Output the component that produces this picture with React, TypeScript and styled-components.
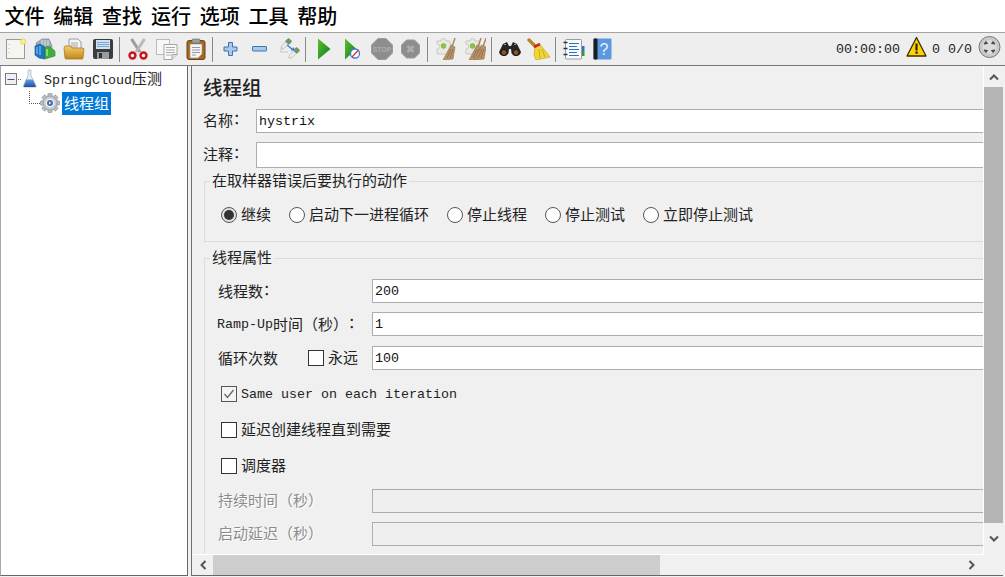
import React from 'react';
import styled, { createGlobalStyle } from 'styled-components';

const CJK = `"Noto Sans CJK SC", "Noto Sans", sans-serif`;
const MONO = `"Liberation Mono", "Noto Sans CJK SC", monospace`;

const Global = createGlobalStyle`
  html, body { margin: 0; padding: 0; background: #fff; }
  * { box-sizing: border-box; }
`;

const Window = styled.div`
  width: 1005px; height: 577px; overflow: hidden; display: flex; flex-direction: column;
  background: #fff; font-family: ${CJK}; font-size: 15px; color: #222; text-spacing-trim: space-all;
`;
const MenuBar = styled.div`
  height: 32px; flex: none; display: flex; align-items: center; gap: 8.8px; padding-left: 4.5px; background: #fff;
`;
const MenuItem = styled.span`
  font-size: 20px; line-height: 32px; font-weight: 500; color: #000;
`;
const ToolBar = styled.div`
  height: 34px; flex: none; display: flex; align-items: center; padding-left: 1px;
  background: #eee; border-top: 1px solid #a3a3a3; border-bottom: 1px solid #777;
`;
const Slot = styled.span`
  width: 29px; height: 32px; flex: none; display: flex; align-items: center; justify-content: center;
`;
const Sep = styled.span`
  width: 6px; height: 25px; flex: none; padding-left: 2px;
  &::before { content: ''; display: block; width: 1px; height: 100%; background: #8a8a8a; }
`;
const Status = styled.div`
  margin-left: auto; display: flex; align-items: center; height: 32px; padding-right: 4px;
  font: 13.33px "Liberation Mono", monospace; color: #222;
`;
const StatusText = styled.span<{ $l: number }>`
  margin-left: ${p => p.$l}px;
`;
const Main = styled.div`
  flex: 1; min-height: 0; display: flex; background: #f0f0f0;
`;
const Tree = styled.div`
  width: 188px; flex: none; background: #fff;
  border-left: 1px solid #a8a8a8; border-right: 1px solid #666; border-bottom: 1px solid #666;
  margin-bottom: 1px;
`;
const TreeRow = styled.div<{ $top?: number }>`
  height: 24px; display: flex; align-items: center; margin: ${p => p.$top ?? 0}px 0 0 -1px;
`;
const TreeText = styled.span<{ $sel?: boolean }>`
  margin-left: ${p => (p.$sel ? 2 : 4)}px; height: 23px; line-height: 21px; padding: 0 2px;
  background: ${p => (p.$sel ? '#0078d7' : 'transparent')}; color: ${p => (p.$sel ? '#fff' : '#222')};
  white-space: nowrap;
`;
const Latin = styled.span`
  font: 13.33px ${MONO};
`;
const Colon = styled.span`
  display: inline-block; transform: translateY(-2px);
`;
const Gutter = styled.div`
  width: 3px; flex: none;
`;
const Panel = styled.div`
  width: 812px; flex: none; margin-bottom: 1px; display: grid;
  grid-template-columns: 1fr 19px; grid-template-rows: 1fr 20px;
  border-left: 1px solid #707070; border-bottom: 1px solid #666; background: #f0f0f0;
`;
const Viewport = styled.div`
  overflow: hidden; min-width: 0; min-height: 0; position: relative;
  border-right: 1px solid #fff; border-bottom: 1px solid #fff;
`;
const Content = styled.div`
  width: 1100px; padding: 10px 0 0 11px;
`;
const Title = styled.h1`
  margin: 0; font: 500 19.5px/22px ${CJK}; color: #222; height: 33px;
`;
const TopRow = styled.div<{ $gap: number }>`
  display: flex; align-items: center; margin-bottom: ${p => p.$gap}px;
`;
const TopLabel = styled.label`
  width: 53px; flex: none; line-height: 20px; padding-bottom: 3px;
`;
const Input = styled.div<{ $h?: number; $disabled?: boolean }>`
  flex: 1; height: ${p => p.$h ?? 24}px; padding-left: 2px; white-space: nowrap;
  border: 1px solid #adadad; background: ${p => (p.$disabled ? '#efefef' : '#fff')};
  font: 13.33px/${p => p.$h ?? 24}px "Liberation Mono", monospace; color: #111;
`;
const Group = styled.fieldset<{ $top: number; $grow?: boolean }>`
  margin: ${p => p.$top}px 0 0 1px; padding: 0; border: 1px solid #dcdcdc; min-width: 0;
  ${p => (p.$grow ? 'height: 400px;' : '')}
`;
const Legend = styled.legend`
  margin-left: 5px; padding: 0 2px 2px; font-size: 15px; line-height: 18px; color: #222;
`;
const RadioRow = styled.div`
  display: flex; align-items: center; gap: 18px; height: 20px; margin: 14px 0 16px 16px;
`;
const Choice = styled.label`
  display: flex; align-items: center; gap: 4px; line-height: 20px; height: 20px; white-space: nowrap;
`;
const ChoiceText = styled.span`
  padding-bottom: 2px;
`;
const Radio = styled.span<{ $on?: boolean }>`
  width: 16px; height: 16px; flex: none; border-radius: 50%; border: 1px solid #555;
  background: #fff; display: flex; align-items: center; justify-content: center;
  ${p => p.$on ? 'background: #e2e2e2; &::after { content: ""; width: 10px; height: 10px; border-radius: 50%; background: #333; }' : ''}
`;
const Box = styled.span<{ $on?: boolean }>`
  width: 16px; height: 16px; flex: none; border: 1px solid ${p => (p.$on ? '#555' : '#333')};
  background: ${p => (p.$on ? '#f3f3f3' : '#fff')}; display: flex; align-items: center; justify-content: center;
`;
const Fields = styled.div`
  padding: 11px 0 0 13px; display: flex; flex-direction: column;
`;
const FieldRow = styled.div<{ $gap: number }>`
  display: flex; align-items: center; margin-bottom: ${p => p.$gap}px;
`;
const FieldLabel = styled.label<{ $disabled?: boolean }>`
  width: 154px; flex: none; display: flex; align-items: center; line-height: 20px; white-space: nowrap;
  ${p => p.$disabled ? 'color: #8c8c8c; text-shadow: 1px 1px 0 #fff; padding-bottom: 3px;' : ''}
`;
const RampLabel = styled(FieldLabel)`
  margin-left: -1px; width: 155px;
`;
const LoopText = styled.span`
  width: 90px; flex: none;
`;
const CheckRow = styled.div<{ $gap: number }>`
  margin: 0 0 ${p => p.$gap}px 3px;
`;
const MonoText = styled.span`
  font: 13.33px "Liberation Mono", monospace; color: #222;
`;
const VBar = styled.div`
  display: flex; flex-direction: column; align-items: stretch; background: #f0f0f0;
`;
const VArrow = styled.span<{ $h: number }>`
  height: ${p => p.$h}px; flex: none; display: flex; align-items: center; justify-content: center;
`;
const VThumb = styled.span`
  height: 436px; flex: none; background: #b4b4b4;
`;
const HBar = styled.div`
  display: flex; align-items: stretch; background: #f0f0f0;
`;
const HArrow = styled.span<{ $w: number }>`
  width: ${p => p.$w}px; flex: none; display: flex; align-items: center; justify-content: center;
`;
const HThumb = styled.span`
  width: 447px; flex: none; background: #cdcdcd;
`;
const HRest = styled.span`
  flex: 1;
`;
const Corner = styled.div`
  background: #f0f0f0;
`;

const I = ({ children, w = 22, h = 22 }: { children: React.ReactNode; w?: number; h?: number }) => (
  <svg width={w} height={h} viewBox={`0 0 ${w} ${h}`} aria-hidden="true">{children}</svg>
);

const NewIcon = () => (
  <I>
    <rect x="1.5" y="1.5" width="18" height="19" fill="#f6f6f0" stroke="#9a9a9a" />
    <path d="M4 6v1M4 10v1M4 14v1" stroke="#bbb" />
    <circle cx="18" cy="3.5" r="2.600" fill="#fdf28a" stroke="#ecd35a" />
  </I>
);
const TemplatesIcon = () => (
  <I>
    <path d="M2 5 L8 1 L15 1 L18 8 L17 14 L4 14Z" fill="#a3adb8" stroke="#6f7b88" strokeWidth=".6" />
    <path d="M8 2v9M11 2v9M14 2v9" stroke="#dfe4e9" />
    <path d="M1 8 L6 6 L11 9 L11 21 L5 20 L1 17Z" fill="#1d76c4" stroke="#0f4f8f" strokeWidth=".6" />
    <path d="M3 9v7M6 8v9" stroke="#8ccaf4" />
    <path d="M11 9 L15 8 L21 13 L21 18 L11 21Z" fill="#43ad3b" stroke="#2a8a2a" strokeWidth=".6" />
    <path d="M13 11v7" stroke="#a8e896" strokeWidth="1.4" />
  </I>
);
const OpenIcon = () => (
  <I>
    <defs><linearGradient id="fo" x1="0" y1="0" x2="0" y2="1"><stop offset="0" stopColor="#f5cd6c" /><stop offset="1" stopColor="#c4861d" /></linearGradient></defs>
    <path d="M6 1h9l3 3v8H6Z" fill="#f4f4f4" stroke="#888" strokeWidth=".8" />
    <path d="M8 5h7M8 7h7M8 9h7" stroke="#aaa" />
    <path d="M1 10 l1-2h6l1 2h11l1 1-1 9a1 1 0 0 1-1 1H3a1 1 0 0 1-1-1Z" fill="url(#fo)" stroke="#a46e14" strokeWidth=".7" />
  </I>
);
const SaveIcon = () => (
  <I>
    <rect x="1" y="1" width="20" height="20" rx="2" fill="#3a3d42" />
    <rect x="4" y="2" width="14" height="9" fill="#cfe1f2" />
    <path d="M5 4.5h12M5 6.500h12M5 8.500h12" stroke="#7fa6cc" />
    <rect x="5" y="14" width="12" height="7" fill="#9a9ca0" />
    <rect x="7" y="15" width="3" height="5" fill="#333" />
  </I>
);
const CutIcon = () => (
  <I>
    <path d="M4.500 1 L13 14" stroke="#9b9b9b" strokeWidth="3" />
    <path d="M17.500 1 L9 14" stroke="#b8b8b8" strokeWidth="3" />
    <circle cx="5.500" cy="17.500" r="3" fill="#eee" stroke="#c9141c" strokeWidth="2.400" />
    <circle cx="16.500" cy="17.500" r="3" fill="#eee" stroke="#c9141c" strokeWidth="2.400" />
  </I>
);
const CopyIcon = () => (
  <I>
    <rect x="0.500" y="1.500" width="13" height="15" fill="#f7f7f7" stroke="#bbb" />
    <path d="M8 6.500h13v10l-5 5H8Z" fill="#fafafa" stroke="#a5a5a5" />
    <path d="M10 9.500h9M10 12h9M10 14.500h9M10 17h5" stroke="#aaa" />
    <path d="M16 21.500v-5h5" fill="#ddd" stroke="#a5a5a5" />
  </I>
);
const PasteIcon = () => (
  <I>
    <rect x="2" y="2.500" width="18" height="19" rx="2" fill="#a9671f" stroke="#6f4412" />
    <path d="M5 6h12v10l-4 4H5Z" fill="#f6f6f6" stroke="#999" strokeWidth=".7" />
    <path d="M7 9.500h8M7 12h8M7 14.500h8M7 17h4" stroke="#999" />
    <rect x="7" y="1" width="8" height="4" rx="1" fill="#9e9e9e" stroke="#666" strokeWidth=".6" />
  </I>
);
const PlusIcon = () => (
  <I>
    <path d="M8.500 4.500h4v4.500h4.500v4H12.500v4.500H8.500V13H4V9H8.500Z" fill="#a9c9ea" stroke="#3d74b0" />
  </I>
);
const MinusIcon = () => (
  <I>
    <rect x="3.500" y="8.500" width="14" height="4.500" rx=".5" fill="#a9c9ea" stroke="#3d74b0" />
  </I>
);
const Dropper = ({ x, y }: { x: number; y: number }) => (
  <g transform={`translate(${x} ${y}) rotate(45) scale(1.2)`}>
    <rect x="-2" y="-5" width="4" height="4" rx="1" fill="#6d9b5e" stroke="#557" strokeWidth=".3" />
    <path d="M-1.500 -1h3v5l-1.500 2l-1.500-2Z" fill="#ececec" stroke="#aaa" strokeWidth=".5" />
  </g>
);
const ToggleIcon = () => (
  <I>
    <Dropper x={8} y={6} />
    <Dropper x={16} y={15} />
    <path d="M2 14 L5 9M2 14h8" stroke="#c8c8c8" fill="none" />
    <path d="M9 7 L14.500 11.500" stroke="#2f7fdc" strokeWidth="1.400" />
    <path d="M12.500 12.500h3.500v-3.500Z" fill="#2f7fdc" />
  </I>
);
const StartIcon = () => (
  <I>
    <defs><linearGradient id="gr" x1="0" y1="0" x2="1" y2="1"><stop offset="0" stopColor="#5fc02e" /><stop offset="1" stopColor="#067a24" /></linearGradient></defs>
    <path d="M5 0.500 L17.500 11 L5 21.500Z" fill="url(#gr)" />
  </I>
);
const StartNoPauseIcon = () => (
  <I>
    <defs><linearGradient id="gs" x1="0" y1="0" x2="1" y2="1"><stop offset="0" stopColor="#5fc02e" /><stop offset="1" stopColor="#067a24" /></linearGradient></defs>
    <path d="M3 0.500 L14.500 11 L3 21.500Z" fill="url(#gs)" />
    <circle cx="13" cy="15.500" r="4.500" fill="#fff" stroke="#3a7fdc" strokeWidth="1.300" />
    <path d="M10 19 L16.500 12" stroke="#e03030" strokeWidth="1.300" />
  </I>
);
const StopText = styled.text`
  font: bold 6.8px "Liberation Sans", sans-serif; fill: #aeaeae;
`;
const StopIcon = () => (
  <I>
    <path d="M7 0.500h8l6.500 6.500v8L15 21.500H7L0.500 15V7Z" fill="#8d8d8d" stroke="#9c9c9c" />
    <StopText x="11" y="13.500" textAnchor="middle">STOP</StopText>
  </I>
);
const ShutdownIcon = () => (
  <I>
    <path d="M6.500 2h8l5 5v8l-5 5h-8l-5-5V7Z" fill="#8d8d8d" stroke="#9c9c9c" />
    <path d="M7.500 8l6 6M13.500 8l-6 6" stroke="#adadad" strokeWidth="2.600" />
  </I>
);
const Puzzle = () => (
  <g transform="translate(0 -4)">
    <path d="M2 7h4a2.500 2.500 0 0 1 5 0h4v3a2.500 2.500 0 0 1 0 5v5H2v-5a2.500 2.500 0 0 0 0-5Z" fill="#e8e8e4" stroke="#c8c8c4" />
    <circle cx="8.500" cy="12" r="2.400" fill="#8cc63f" stroke="#6b9e2a" strokeWidth=".5" />
  </g>
);
const Brush = ({ x = 0 }: { x?: number }) => (
  <g transform={`translate(${x} 0)`}>
    <path d="M17 0 L14 9" stroke="#a8865c" strokeWidth="1.400" />
    <path d="M13 7 L17 9 L15 21 L5 22Z" fill="#b79368" stroke="#96744c" strokeWidth=".6" />
    <path d="M13 11 L9 20M15 11 L12 20" stroke="#8a6a44" strokeWidth=".8" />
  </g>
);
const ClearIcon = () => (
  <I><Puzzle /><Brush x={3} /></I>
);
const ClearAllIcon = () => (
  <I><Puzzle /><Brush x={0} /><Brush x={5} /></I>
);
const BinocularsIcon = () => (
  <I>
    <path d="M4 6 L8 4 L10 8 L12 8 L14 4 L18 6 L22 14 A5 5 0 0 1 12.500 15 L12 11 H10 L9.500 15 A5 5 0 0 1 0 14Z" fill="#262626" />
    <circle cx="5" cy="14.500" r="3" fill="#8a5423" stroke="#111" />
    <circle cx="17" cy="14.500" r="3" fill="#8a5423" stroke="#111" />
    <path d="M5 6.500h2M15 6.500h2" stroke="#999" />
  </I>
);
const BroomIcon = () => (
  <I w={24}>
    <path d="M2 2 L9 9" stroke="#b9822d" strokeWidth="3.400" strokeLinecap="round" />
    <path d="M8 9 L13 6.500 L20 15 L23 19 L14 21 L9 22 L7 17Z" fill="#f1d435" stroke="#b8a020" strokeWidth=".6" />
    <path d="M7 9 L13 6" stroke="#cc2a2a" strokeWidth="2.600" />
    <path d="M12 11 L13 20M15 11 L18 19" stroke="#c9ac1e" />
  </I>
);
const LogIcon = () => (
  <I>
    <rect x="2.500" y="1.500" width="16" height="19.500" rx="1" fill="#fafafa" stroke="#9b9b9b" />
    <path d="M6 5.500h10M6 8.500h8M6 11.500h10M6 14.500h8M6 17.500h10" stroke="#2a73d2" strokeWidth="1.200" />
    <path d="M0.500 4.500h4M0.500 10.500h4M0.500 16.500h4" stroke="#333" strokeWidth="1.400" />
    <rect x="19" y="8" width="2.500" height="5" fill="#2a73d2" />
    <rect x="19" y="13" width="2.500" height="5" fill="#2e9a3a" />
  </I>
);
const HelpText = styled.text`
  font: 16px "Liberation Sans", sans-serif; fill: #eaf3ff;
`;
const HelpIcon = () => (
  <I>
    <rect x="1.500" y="0.500" width="18" height="21" rx="1" fill="#5a98e0" />
    <rect x="1.500" y="0.500" width="4" height="21" rx="1" fill="#1c1c1c" />
    <HelpText x="12" y="17" textAnchor="middle">?</HelpText>
  </I>
);
const WarningIcon = () => (
  <I w={21}>
    <path d="M10.500 1.500 L20 20 H1Z" fill="#ffd200" stroke="#3a3000" strokeWidth="1.300" strokeLinejoin="round" />
    <path d="M10.500 7.500v7" stroke="#222" strokeWidth="2.200" />
    <rect x="9.500" y="15.500" width="2.200" height="2.200" fill="#222" />
  </I>
);
const RemoteIcon = () => (
  <I w={23}>
    <circle cx="11.500" cy="11" r="10.500" fill="#c9c9c9" stroke="#777" />
    <circle cx="11.500" cy="11" r="7" fill="#dcdcdc" />
    <path d="M6 8 L8 5.500 L9.500 7.500ZM17 8 L15 5.500 L13.500 7.500ZM6 14 L8 16.500 L9.500 14.500ZM17 14 L15 16.500 L13.500 14.500Z" fill="#444" stroke="#444" />
  </I>
);
const ExpandBox = () => (
  <svg width="22" height="24" viewBox="0 0 22 24" aria-hidden="true">
    <rect x="5.500" y="7.500" width="11" height="11" fill="#f0f0f0" stroke="#7b7b7b" />
    <path d="M7.500 13.500h7" stroke="#3a5a90" />
    <path d="M18 13.500h4" stroke="#666" strokeDasharray="1 1" />
  </svg>
);
const FlaskIcon = () => (
  <svg width="16" height="19" viewBox="0 0 16 20" aria-hidden="true">
    <defs><linearGradient id="fl" x1="0" y1="0" x2="0" y2="1"><stop offset="0" stopColor="#5f9fe8" /><stop offset="1" stopColor="#1d4f9e" /></linearGradient></defs>
    <path d="M6 1h3v6l5.500 10.500a1 1 0 0 1-1 1.500H2a1 1 0 0 1-1-1.500L6 7Z" fill="#e8eef4" stroke="#a0acb8" strokeWidth=".7" />
    <path d="M4 11h7l3 7a.6.6 0 0 1-.5 1H2a.6.6 0 0 1-.5-1Z" fill="url(#fl)" />
  </svg>
);
const Connector = () => (
  <svg width="40" height="24" viewBox="0 0 40 24" aria-hidden="true">
    <path d="M29.500 0v12.500H40" fill="none" stroke="#555" strokeDasharray="1 1" />
  </svg>
);
const GearIcon = () => (
  <svg width="20" height="20" viewBox="0 0 20 20" aria-hidden="true">
    <g fill="#b9bdc4" stroke="#7f848c" strokeWidth=".5">
      {[0, 45, 90, 135, 180, 225, 270, 315].map(a => (
        <rect key={a} x="7.800" y="0.300" width="4.400" height="5" rx="1" transform={`rotate(${a} 10 10)`} />
      ))}
    </g>
    <circle cx="10" cy="10" r="7" fill="#c9ccd2" stroke="#868b92" strokeWidth=".6" />
    <circle cx="10" cy="10" r="4.300" fill="#f4f5f7" />
    <circle cx="10" cy="10" r="3" fill="#3f6fa8" />
    <path d="M9 8.500l2.500 1.500-2.500 1.500Z" fill="#dce8f5" />
  </svg>
);
const Chevron = ({ d }: { d: 'up' | 'down' | 'left' | 'right' }) => {
  const r = { up: 0, right: 90, down: 180, left: 270 }[d];
  return (
    <svg width="10" height="10" viewBox="0 0 10 10" aria-hidden="true">
      <path d="M1 7.500 L5 3.500 L9 7.500" fill="none" stroke="#555" strokeWidth="2" transform={`rotate(${r} 5 5)`} />
    </svg>
  );
};
const Tick = () => (
  <svg width="12" height="12" viewBox="0 0 12 12" aria-hidden="true">
    <path d="M1.500 6 L4.500 9.500 L10.500 2" fill="none" stroke="#666" strokeWidth="1.300" />
  </svg>
);

const toolGroups: React.FC[][] = [
  [NewIcon, TemplatesIcon, OpenIcon, SaveIcon],
  [CutIcon, CopyIcon, PasteIcon],
  [PlusIcon, MinusIcon, ToggleIcon],
  [StartIcon, StartNoPauseIcon, StopIcon, ShutdownIcon],
  [ClearIcon, ClearAllIcon],
  [BinocularsIcon, BroomIcon],
  [LogIcon, HelpIcon],
];

const menus = ['文件', '编辑', '查找', '运行', '选项', '工具', '帮助'];
const radios = ['继续', '启动下一进程循环', '停止线程', '停止测试', '立即停止测试'];

export default function App() {
  return (
    <Window>
      <Global />
      <MenuBar>{menus.map(m => <MenuItem key={m}>{m}</MenuItem>)}</MenuBar>
      <ToolBar>
        {toolGroups.map((group, gi) => (
          <React.Fragment key={gi}>
            {gi > 0 && <Sep />}
            {group.map((Icon, i) => <Slot key={i}><Icon /></Slot>)}
          </React.Fragment>
        ))}
        <Status>
          <span>00:00:00</span>
          <StatusText $l={6}><WarningIcon /></StatusText>
          <StatusText $l={5}>0</StatusText>
          <StatusText $l={8}>0/0</StatusText>
          <StatusText $l={6}><RemoteIcon /></StatusText>
        </Status>
      </ToolBar>
      <Main>
        <Tree>
          <TreeRow>
            <ExpandBox /><FlaskIcon />
            <TreeText><Latin>SpringCloud</Latin>压测</TreeText>
          </TreeRow>
          <TreeRow $top={1}>
            <Connector /><GearIcon />
            <TreeText $sel>线程组</TreeText>
          </TreeRow>
        </Tree>
        <Gutter />
        <Panel>
          <Viewport>
            <Content>
              <Title>线程组</Title>
              <TopRow $gap={9}><TopLabel>名称<Colon>：</Colon></TopLabel><Input>hystrix</Input></TopRow>
              <TopRow $gap={0}><TopLabel>注释<Colon>：</Colon></TopLabel><Input $h={26} /></TopRow>
              <Group $top={3}>
                <Legend>在取样器错误后要执行的动作</Legend>
                <RadioRow>
                  {radios.map((r, i) => (
                    <Choice key={r}><Radio $on={i === 0} /><ChoiceText>{r}</ChoiceText></Choice>
                  ))}
                </RadioRow>
              </Group>
              <Group $top={6} $grow>
                <Legend>线程属性</Legend>
                <Fields>
                  <FieldRow $gap={9}><FieldLabel>线程数<Colon>：</Colon></FieldLabel><Input>200</Input></FieldRow>
                  <FieldRow $gap={10}><RampLabel><Latin>Ramp-Up</Latin>时间（秒）<Colon>：</Colon></RampLabel><Input>1</Input></FieldRow>
                  <FieldRow $gap={14}>
                    <FieldLabel>
                      <LoopText>循环次数</LoopText>
                      <Choice><Box /><ChoiceText>永远</ChoiceText></Choice>
                    </FieldLabel>
                    <Input>100</Input>
                  </FieldRow>
                  <CheckRow $gap={16}><Choice><Box $on><Tick /></Box><MonoText>Same user on each iteration</MonoText></Choice></CheckRow>
                  <CheckRow $gap={16}><Choice><Box /><ChoiceText>延迟创建线程直到需要</ChoiceText></Choice></CheckRow>
                  <CheckRow $gap={13}><Choice><Box /><ChoiceText>调度器</ChoiceText></Choice></CheckRow>
                  <FieldRow $gap={9}><FieldLabel $disabled>持续时间（秒）</FieldLabel><Input $disabled /></FieldRow>
                  <FieldRow $gap={9}><FieldLabel $disabled>启动延迟（秒）</FieldLabel><Input $disabled /></FieldRow>
                </Fields>
              </Group>
            </Content>
          </Viewport>
          <VBar>
            <VArrow $h={21}><Chevron d="up" /></VArrow>
            <VThumb />
            <VArrow $h={32}><Chevron d="down" /></VArrow>
          </VBar>
          <HBar>
            <HArrow $w={21}><Chevron d="left" /></HArrow>
            <HThumb />
            <HRest />
            <HArrow $w={24}><Chevron d="right" /></HArrow>
          </HBar>
          <Corner />
        </Panel>
      </Main>
    </Window>
  );
}
